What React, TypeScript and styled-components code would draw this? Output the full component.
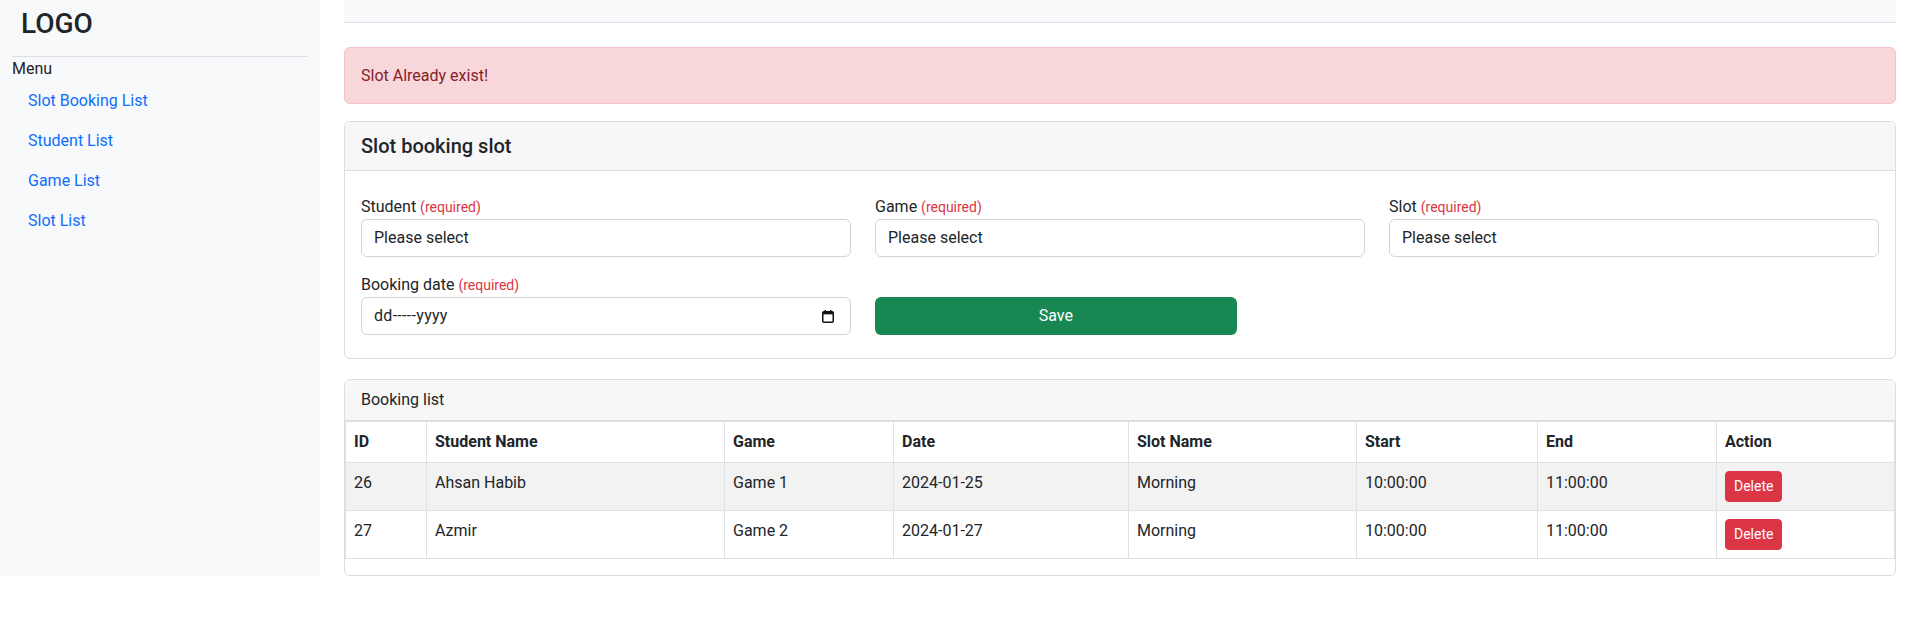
import * as React from 'react';
import styled, { createGlobalStyle } from 'styled-components';

interface Booking {
  id: number;
  student: string;
  game: string;
  date: string;
  slot: string;
  start: string;
  end: string;
}

const bookings: Booking[] = [
  { id: 26, student: 'Ahsan Habib', game: 'Game 1', date: '2024-01-25', slot: 'Morning', start: '10:00:00', end: '11:00:00' },
  { id: 27, student: 'Azmir', game: 'Game 2', date: '2024-01-27', slot: 'Morning', start: '10:00:00', end: '11:00:00' },
];

const columns: { title: string; width: number }[] = [
  { title: 'ID', width: 81 },
  { title: 'Student Name', width: 298 },
  { title: 'Game', width: 169 },
  { title: 'Date', width: 235 },
  { title: 'Slot Name', width: 228 },
  { title: 'Start', width: 181 },
  { title: 'End', width: 179 },
  { title: 'Action', width: 178 },
];

const menu = ['Slot Booking List', 'Student List', 'Game List', 'Slot List'];

/**
 * Small calendar glyph like the one chrome draws in a date input.
 */
const CalendarIcon = () => (
  <svg width="12" height="13" viewBox="0 0 12 13">
    <rect x="0.75" y="1.75" width="10.5" height="10.5" rx="1.2" fill="none" stroke="#111" strokeWidth="1.5" />
    <rect x="0.75" y="1.75" width="10.5" height="2.6" fill="#111" />
    <rect x="2.6" y="0" width="1.4" height="2.4" fill="#111" />
    <rect x="8" y="0" width="1.4" height="2.4" fill="#111" />
  </svg>
);

export default function App() {
  return (
    <>
      <GlobalStyle />
      <Layout>
        <Sidebar>
          <Logo>LOGO</Logo>
          <Divider />
          <MenuTitle>Menu</MenuTitle>
          <NavList>
            {menu.map(item => (
              <li key={item}>
                <NavLink href="#">{item}</NavLink>
              </li>
            ))}
          </NavList>
        </Sidebar>
        <Main>
          <TopBar />
          <Alert>Slot Already exist!</Alert>
          <Card>
            <CardHeader $large>Slot booking slot</CardHeader>
            <CardBody>
              <FormGrid>
                <Field $span={4}>
                  <Label>
                    Student <Required>(required)</Required>
                  </Label>
                  <Select defaultValue="">
                    <option value="">Please select</option>
                  </Select>
                </Field>
                <Field $span={4}>
                  <Label>
                    Game <Required>(required)</Required>
                  </Label>
                  <Select defaultValue="">
                    <option value="">Please select</option>
                  </Select>
                </Field>
                <Field $span={4}>
                  <Label>
                    Slot <Required>(required)</Required>
                  </Label>
                  <Select defaultValue="">
                    <option value="">Please select</option>
                  </Select>
                </Field>
                <Field $span={4}>
                  <Label>
                    Booking date <Required>(required)</Required>
                  </Label>
                  <DateField>
                    <DateText>dd-----yyyy</DateText>
                    <CalendarIcon />
                  </DateField>
                </Field>
                <Field $span={3} $bottom>
                  <SaveButton type="button">Save</SaveButton>
                </Field>
              </FormGrid>
            </CardBody>
          </Card>
          <Card $gap={20}>
            <CardHeader>Booking list</CardHeader>
            <Table>
              <colgroup>
                {columns.map(c => (
                  <col key={c.title} style={{ width: c.width }} />
                ))}
              </colgroup>
              <thead>
                <tr>
                  {columns.map(c => (
                    <Th key={c.title}>{c.title}</Th>
                  ))}
                </tr>
              </thead>
              <tbody>
                {bookings.map((b, i) => (
                  <Row key={b.id} $striped={i % 2 === 0}>
                    <Td>{b.id}</Td>
                    <Td>{b.student}</Td>
                    <Td>{b.game}</Td>
                    <Td>{b.date}</Td>
                    <Td>{b.slot}</Td>
                    <Td>{b.start}</Td>
                    <Td>{b.end}</Td>
                    <Td>
                      <DeleteButton type="button">Delete</DeleteButton>
                    </Td>
                  </Row>
                ))}
              </tbody>
            </Table>
          </Card>
        </Main>
      </Layout>
    </>
  );
}

const GlobalStyle = createGlobalStyle`
  body {
    margin: 0;
    font-family: Roboto, "Liberation Sans", sans-serif;
    font-size: 16px;
    line-height: 1.5;
    color: #212529;
    background: #fff;
  }
  * {
    box-sizing: border-box;
  }
`;

const Layout = styled.div`
  display: flex;
  align-items: stretch;
`;

const Sidebar = styled.aside`
  width: 320px;
  flex-shrink: 0;
  background: #f8f9fa;
  padding: 0 12px;
`;

const Logo = styled.h3`
  margin: 0;
  padding: 7px 9px 0;
  font-size: 28px;
  font-weight: 500;
  line-height: 34px;
`;

const Divider = styled.hr`
  margin: 15px 0 0;
  border: 0;
  border-top: 1px solid #dcdde0;
`;

const MenuTitle = styled.div`
  line-height: 24px;
`;

const NavList = styled.ul`
  list-style: none;
  margin: 0;
  padding: 0;
`;

const NavLink = styled.a`
  display: block;
  padding: 8px 16px;
  color: #0d6efd;
  text-decoration: none;
`;

const Main = styled.main`
  flex: 1;
  padding: 0 24px;
`;

const TopBar = styled.div`
  height: 23px;
  background: #f8f9fa;
  border-bottom: 1px solid #dee2e6;
`;

const Alert = styled.div`
  margin-top: 24px;
  padding: 16px 16px 15px;
  background: #f8d7da;
  border: 1px solid #f5c2c7;
  border-radius: 6px;
  color: #842029;
  line-height: 24px;
`;

const Card = styled.section<{ $gap?: number }>`
  margin-top: ${p => p.$gap ?? 17}px;
  border: 1px solid #dddddd;
  border-radius: 6px;
  overflow: hidden;
  background: #fff;
`;

const CardHeader = styled.div<{ $large?: boolean }>`
  padding: ${p => (p.$large ? '12px 16px' : '8px 16px')};
  background: #f7f7f7;
  border-bottom: 1px solid #dddddd;
  font-size: ${p => (p.$large ? '20px' : '16px')};
  font-weight: ${p => (p.$large ? 500 : 400)};
  line-height: 24px;
`;

const CardBody = styled.div`
  padding: 24px 16px 23px;
`;

const FormGrid = styled.div`
  display: grid;
  grid-template-columns: repeat(12, 1fr);
  column-gap: 24px;
  row-gap: 16px;
`;

const Field = styled.div<{ $span: number; $bottom?: boolean }>`
  grid-column: span ${p => p.$span};
  align-self: ${p => (p.$bottom ? 'end' : 'start')};
`;

const Label = styled.label`
  display: block;
  line-height: 24px;
`;

const Required = styled.span`
  color: #dc3545;
  font-size: 14px;
`;

const Select = styled.select`
  display: block;
  width: 100%;
  height: 38px;
  padding: 6px 12px;
  font: inherit;
  color: #212529;
  background: #fff;
  border: 1px solid #ced4da;
  border-radius: 6px;
  appearance: none;
`;

const DateField = styled.div`
  display: flex;
  align-items: center;
  justify-content: space-between;
  height: 38px;
  padding: 6px 16px 6px 12px;
  border: 1px solid #ced4da;
  border-radius: 6px;
  background: #fff;
`;

const DateText = styled.span`
  letter-spacing: 0.3px;
`;

const SaveButton = styled.button`
  display: block;
  width: 100%;
  height: 38px;
  border: 0;
  border-radius: 6px;
  background: #198754;
  color: #fff;
  font: inherit;
`;

const Table = styled.table`
  width: 100%;
  table-layout: fixed;
  border-collapse: collapse;
  margin-bottom: 16px;
  border: 1px solid #dee2e6;
  vertical-align: top;
`;

const Th = styled.th`
  padding: 8px;
  text-align: left;
  font-weight: 700;
  border: 1px solid #dee2e6;
`;

const Row = styled.tr<{ $striped: boolean }>`
  background: ${p => (p.$striped ? '#f2f2f2' : '#fff')};
`;

const Td = styled.td`
  padding: 8px;
  border: 1px solid #dee2e6;
  vertical-align: top;
`;

const DeleteButton = styled.button`
  padding: 4px 8px;
  border: 1px solid #dc3545;
  border-radius: 4px;
  background: #dc3545;
  color: #fff;
  font-family: inherit;
  font-size: 14px;
  line-height: 21px;
`;
